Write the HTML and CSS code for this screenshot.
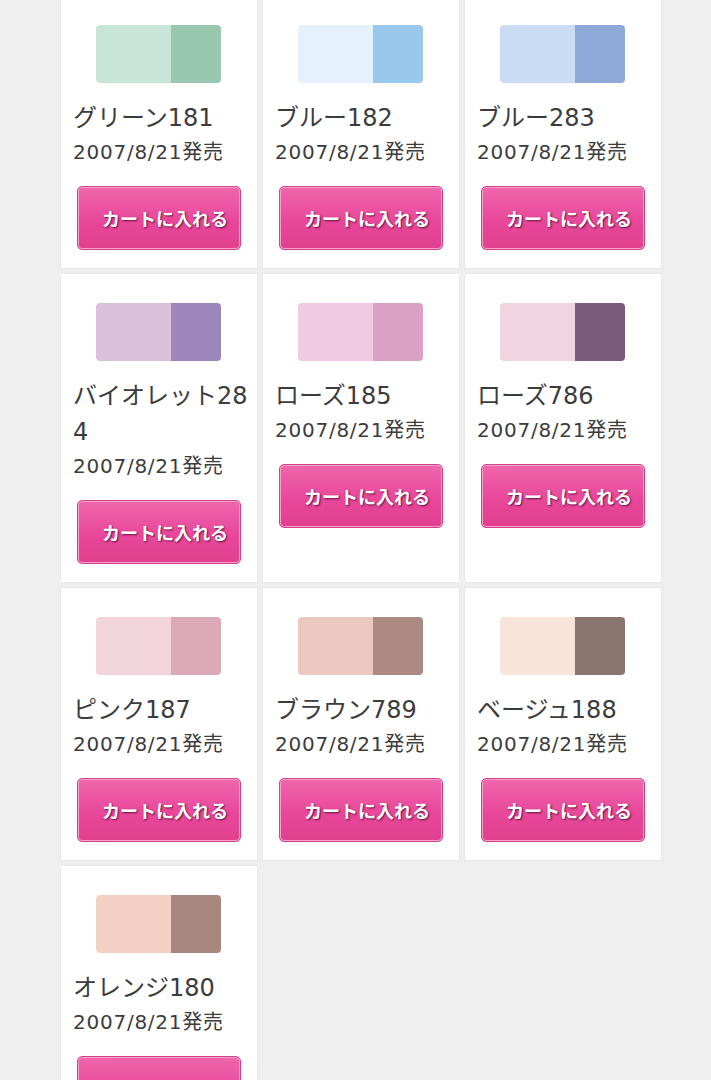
FILE: index.html
```html
<!DOCTYPE html>
<html lang="ja">
<head>
<meta charset="utf-8">
<title>Products</title>
<link rel="stylesheet" href="styles.css">
</head>
<body>
<div class="grid">
  <div class="card">
    <div class="swatch"><span class="light" style="background:#c9e5d7"></span><span class="dark" style="background:#98c8b0"></span></div>
    <div class="name">グリーン181</div>
    <div class="date">2007/8/21発売</div>
    <button class="cart">カートに入れる</button>
  </div>
  <div class="card">
    <div class="swatch"><span class="light" style="background:#e5f2fd"></span><span class="dark" style="background:#9ac7ec"></span></div>
    <div class="name">ブルー182</div>
    <div class="date">2007/8/21発売</div>
    <button class="cart">カートに入れる</button>
  </div>
  <div class="card">
    <div class="swatch"><span class="light" style="background:#c9dcf3"></span><span class="dark" style="background:#8ea8d8"></span></div>
    <div class="name">ブルー283</div>
    <div class="date">2007/8/21発売</div>
    <button class="cart">カートに入れる</button>
  </div>
  <div class="card">
    <div class="swatch"><span class="light" style="background:#dac0da"></span><span class="dark" style="background:#9d87bd"></span></div>
    <div class="name">バイオレット284</div>
    <div class="date">2007/8/21発売</div>
    <button class="cart">カートに入れる</button>
  </div>
  <div class="card">
    <div class="swatch"><span class="light" style="background:#f0cae0"></span><span class="dark" style="background:#dba2c5"></span></div>
    <div class="name">ローズ185</div>
    <div class="date">2007/8/21発売</div>
    <button class="cart">カートに入れる</button>
  </div>
  <div class="card">
    <div class="swatch"><span class="light" style="background:#f1d4df"></span><span class="dark" style="background:#7a5b7e"></span></div>
    <div class="name">ローズ786</div>
    <div class="date">2007/8/21発売</div>
    <button class="cart">カートに入れる</button>
  </div>
  <div class="card">
    <div class="swatch"><span class="light" style="background:#f2d4dc"></span><span class="dark" style="background:#dbaab6"></span></div>
    <div class="name">ピンク187</div>
    <div class="date">2007/8/21発売</div>
    <button class="cart">カートに入れる</button>
  </div>
  <div class="card">
    <div class="swatch"><span class="light" style="background:#ecc9c0"></span><span class="dark" style="background:#ac8a82"></span></div>
    <div class="name">ブラウン789</div>
    <div class="date">2007/8/21発売</div>
    <button class="cart">カートに入れる</button>
  </div>
  <div class="card">
    <div class="swatch"><span class="light" style="background:#f8e4d9"></span><span class="dark" style="background:#8a746d"></span></div>
    <div class="name">ベージュ188</div>
    <div class="date">2007/8/21発売</div>
    <button class="cart">カートに入れる</button>
  </div>
  <div class="card">
    <div class="swatch"><span class="light" style="background:#f3d0c4"></span><span class="dark" style="background:#a7867d"></span></div>
    <div class="name">オレンジ180</div>
    <div class="date">2007/8/21発売</div>
    <button class="cart">カートに入れる</button>
  </div>
</div>
</body>
</html>
```
FILE: styles.css
```css
html, body {
  margin: 0;
  padding: 0;
  background: #efefef;
}
body {
  font-family: "Noto Sans CJK JP", "Noto Sans", sans-serif;
  color: #333;
}
.grid {
  display: grid;
  grid-template-columns: repeat(3, 196px);
  gap: 6px;
  margin: -4px 0 0 61px;
  width: 600px;
}
.card {
  background: #fff;
  box-shadow: 0 0 0 1px #e9e9e9;
  padding: 29px 8px 18px 12px;
  display: flex;
  flex-direction: column;
}
.swatch {
  width: 125px;
  height: 58px;
  margin: 0 0 17px 23px;
  display: flex;
  border-radius: 4px;
  overflow: hidden;
}
.swatch .light {
  width: 75px;
}
.swatch .dark {
  width: 50px;
}
.name {
  font-family: "DejaVu Sans", "Noto Sans CJK JP", sans-serif;
  font-weight: 400;
  font-size: 24px;
  line-height: 36px;
  word-break: break-all;
  color: #3c3c3c;
}
.date {
  font-family: "DejaVu Sans", "Noto Sans CJK JP", sans-serif;
  font-weight: 400;
  font-size: 20px;
  line-height: 32px;
  letter-spacing: 0.75px;
  color: #3c3c3c;
}
.cart {
  margin: 18px 0 0 4px;
  width: 164px;
  height: 64px;
  box-sizing: border-box;
  border: 1px solid #d2408a;
  border-radius: 5px;
  background: linear-gradient(#f067ad, #e8479a 55%, #e2408f);
  box-shadow: inset 0 0 0 1px #f6a2cc;
  color: #fff;
  font-family: "Noto Sans CJK JP", sans-serif;
  font-weight: 700;
  font-size: 18px;
  padding: 0 0 0 12px;
  text-shadow: 1px 1px 2px rgba(70, 0, 40, 0.8);
  cursor: pointer;
}
```
